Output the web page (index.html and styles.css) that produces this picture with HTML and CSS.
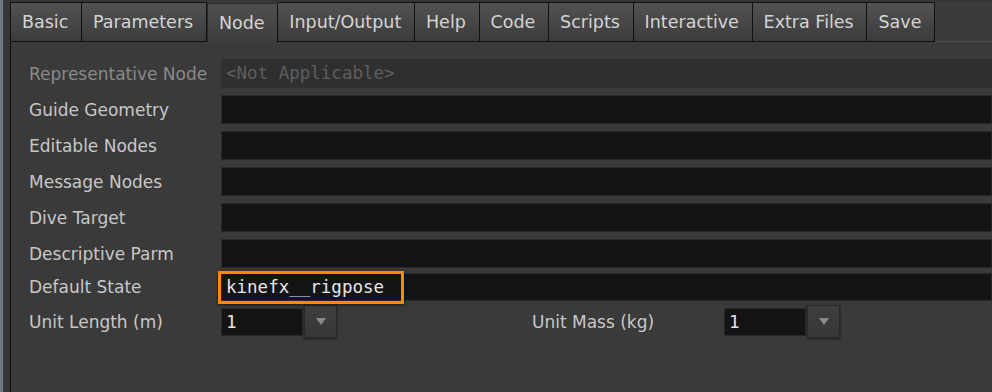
FILE: index.html
```html
<!DOCTYPE html>
<html lang="en">
<head>
  <meta charset="UTF-8">
  <title>Type Properties - Node</title>
  <link rel="stylesheet" href="styles.css">
</head>
<body>
  <div class="window">
    <div class="edge"></div>
    <div class="dialog">

      <!-- Tab bar -->
      <div class="tabs">
        <div class="tab">Basic</div>
        <div class="tab">Parameters</div>
        <div class="tab active">Node</div>
        <div class="tab">Input/Output</div>
        <div class="tab">Help</div>
        <div class="tab">Code</div>
        <div class="tab">Scripts</div>
        <div class="tab">Interactive</div>
        <div class="tab">Extra Files</div>
        <div class="tab">Save</div>
      </div>

      <!-- Node page -->
      <div class="page">
        <div class="row disabled">
          <span class="label">Representative Node</span>
          <div class="field">&lt;Not Applicable&gt;</div>
        </div>
        <div class="row">
          <span class="label">Guide Geometry</span>
          <div class="field"></div>
        </div>
        <div class="row">
          <span class="label">Editable Nodes</span>
          <div class="field"></div>
        </div>
        <div class="row">
          <span class="label">Message Nodes</span>
          <div class="field"></div>
        </div>
        <div class="row">
          <span class="label">Dive Target</span>
          <div class="field"></div>
        </div>
        <div class="row">
          <span class="label">Descriptive Parm</span>
          <div class="field"></div>
        </div>
        <div class="row state">
          <span class="label">Default State</span>
          <div class="field">kinefx__rigpose<span class="highlight"></span></div>
        </div>
        <div class="row units">
          <div class="half">
            <span class="label">Unit Length (m)</span>
            <div class="field small">1</div>
            <div class="menu-btn"><svg width="10" height="9" viewBox="0 0 10 9"><polygon points="0,1 10,1 5,8" fill="#8a8a8a"/></svg></div>
          </div>
          <div class="half">
            <span class="label">Unit Mass (kg)</span>
            <div class="field small">1</div>
            <div class="menu-btn"><svg width="10" height="9" viewBox="0 0 10 9"><polygon points="0,1 10,1 5,8" fill="#8a8a8a"/></svg></div>
          </div>
        </div>
      </div>

    </div>
  </div>
</body>
</html>
```

FILE: styles.css
```css
:root {
  --panel: #3a3a3a;
  --field: #141414;
  --border-dark: #101010;
  --text: #c8c8c8;
  --ui-font: "DejaVu Sans", "Liberation Sans", sans-serif;
  --mono-font: "DejaVu Sans Mono", "Liberation Mono", monospace;
}
* { box-sizing: border-box; }
body { margin: 0; background: #363636; font-family: var(--ui-font); overflow: hidden; }
.window { display: flex; height: 392px; }
.edge { width: 3px; background: #6b7882; }
.dialog { flex: 1; min-width: 0; margin-left: 7px; padding-top: 2px; display: flex; flex-direction: column; }

/* tabs */
.tabs { display: flex; height: 40px; background: #3b3b3b; box-shadow: inset 0 -1px #4a4a4a; }
.tab { padding: 1px 12.7px 0 11px; border: 1px solid var(--border-dark); border-left: none; background: linear-gradient(#525252, #3b3b3b); color: #d4d4d4; font-size: 17.5px; line-height: 37px; white-space: nowrap; }
.tab:first-child { border-left: 1px solid var(--border-dark); }
.tab.active { margin-top: 1px; height: 40px; border-left: 1px solid #2c2c2c; border-top-color: #2c2c2c; border-bottom: none; background: linear-gradient(#4f4f4f, #424242 70%, #3c3c3c); line-height: 36px; }

/* page */
.page { flex: 1; background: var(--panel); border-left: 1px solid var(--border-dark); padding: 17px 0 0 18px; }
.row { display: flex; align-items: center; height: 29px; margin-bottom: 7px; }
.label { width: 192px; flex: none; color: var(--text); font-size: 17px; white-space: nowrap; }
.field { position: relative; flex: 1; height: 29px; padding-left: 4px; background: var(--field); border: 1px solid #282828; color: #e6e6e6; font-family: var(--mono-font); font-size: 17.5px; line-height: 27px; white-space: nowrap; }
.disabled .label { color: #8a8a8a; }
.disabled .field { background: #2f2f2f; border-color: #2f2f2f; color: #5e5e5e; }

.row.state { height: 28px; margin-top: -2px; margin-bottom: 4px; }
.row.state .field { height: 28px; line-height: 26px; }
.highlight { position: absolute; left: -4px; top: -3px; width: 186px; height: 33px; border: 3px solid #ff8a00; box-shadow: 0 1px 3px rgba(0, 0, 0, 0.6); }

.row.units { align-items: flex-start; height: 33px; }
.half { flex: none; display: flex; align-items: center; width: 503px; }
.field.small { flex: none; width: 82px; height: 28px; line-height: 26px; margin-right: 1px; }
.menu-btn { display: flex; align-items: center; justify-content: center; width: 33px; height: 33px; background: linear-gradient(#3f3f3f, #363636); border: 1px solid #2a2a2a; box-shadow: 0 1px 2px rgba(0, 0, 0, 0.6); }
```
